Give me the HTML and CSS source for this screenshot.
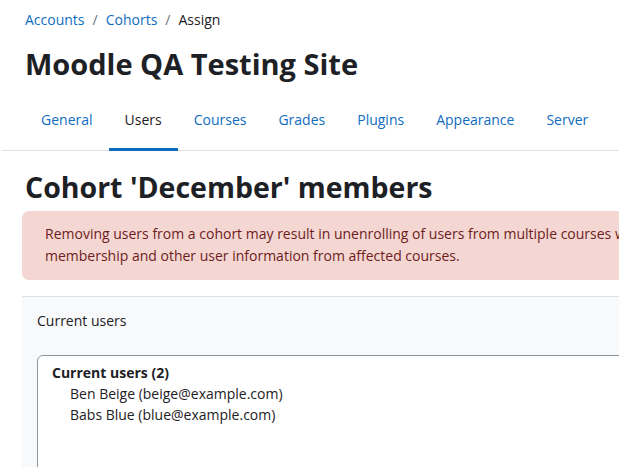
FILE: index.html
```html
<!DOCTYPE html>
<html lang="en">
<head>
  <meta charset="UTF-8">
  <title>Moodle QA Testing Site: Cohort 'December' members</title>
  <link rel="stylesheet" href="styles.css">
</head>
<body>
  <div class="page">
    <div class="page-header">
      <nav class="breadcrumb">
        <a href="#">Accounts</a>
        <span class="sep">/</span>
        <a href="#">Cohorts</a>
        <span class="sep">/</span>
        <span class="current">Assign</span>
      </nav>
      <h1>Moodle QA Testing Site</h1>
    </div>

    <ul class="tabs">
      <li><a href="#">General</a></li>
      <li class="active"><a href="#">Users</a></li>
      <li><a href="#">Courses</a></li>
      <li><a href="#">Grades</a></li>
      <li><a href="#">Plugins</a></li>
      <li><a href="#">Appearance</a></li>
      <li><a href="#">Server</a></li>
    </ul>

    <div class="content">
      <h2>Cohort 'December' members</h2>

      <div class="alert">
        Removing users from a cohort may result in unenrolling of users from multiple courses which includes deleting user settings, grades, group
        membership and other user information from affected courses.
      </div>

      <div class="assign-panel">
        <div class="column">
          <label class="column-label">Current users</label>
          <div class="select-box">
            <div class="optgroup">Current users (2)</div>
            <div class="option">Ben Beige (beige@example.com)</div>
            <div class="option">Babs Blue (blue@example.com)</div>
          </div>
        </div>
      </div>
    </div>
  </div>
</body>
</html>
```

FILE: styles.css
```css
* {
  margin: 0;
  padding: 0;
  box-sizing: border-box;
}

body {
  font-family: "Open Sans", "Noto Sans", sans-serif;
  font-size: 14px;
  color: #1d2125;
  background: #fff;
  overflow: hidden;
}

.page {
  width: 1000px;
  padding-left: 2px;
}

.page-header {
  padding: 9px 0 0 23px;
}

.breadcrumb {
  display: flex;
  gap: 8px;
  font-size: 14px;
  line-height: 22px;
}

.breadcrumb a {
  color: #0f6cbf;
  text-decoration: none;
}

.breadcrumb .sep {
  color: #6a737b;
}

h1 {
  font-size: 29px;
  font-weight: 700;
  line-height: 36px;
  margin-top: 15px;
}

.tabs {
  list-style: none;
  display: flex;
  margin-top: 10px;
  padding-left: 23px;
  border-bottom: 1px solid #dee2e6;
}

.tabs li a {
  display: block;
  padding: 0 16px;
  line-height: 56px;
  font-size: 14px;
  color: #0f6cbf;
  text-decoration: none;
  border-bottom: 3px solid transparent;
  margin-bottom: -1px;
}

.tabs li.active a {
  color: #1d2125;
  border-bottom-color: #0f6cbf;
}

.content {
  padding: 18px 0 0 20px;
}

h2 {
  font-size: 28.5px;
  font-weight: 700;
  line-height: 36px;
  padding-left: 3px;
}

.alert {
  margin-top: 6px;
  background: #f4d6d2;
  color: #6e1d1d;
  border-radius: 7px;
  padding: 12px 23px 13px;
  line-height: 22px;
  font-size: 14px;
}

.assign-panel {
  margin-top: 16px;
  background: #f8f9fa;
  border-top: 1px solid #dee2e6;
  padding: 13px 15px;
}

.column-label {
  display: block;
  line-height: 22px;
}

.select-box {
  margin-top: 23px;
  height: 200px;
  background: #fff;
  border: 1px solid #8f959e;
  border-radius: 6px;
  padding: 6px 14px;
  line-height: 21px;
}

.optgroup {
  font-weight: 700;
}

.option {
  padding-left: 18px;
}
```
